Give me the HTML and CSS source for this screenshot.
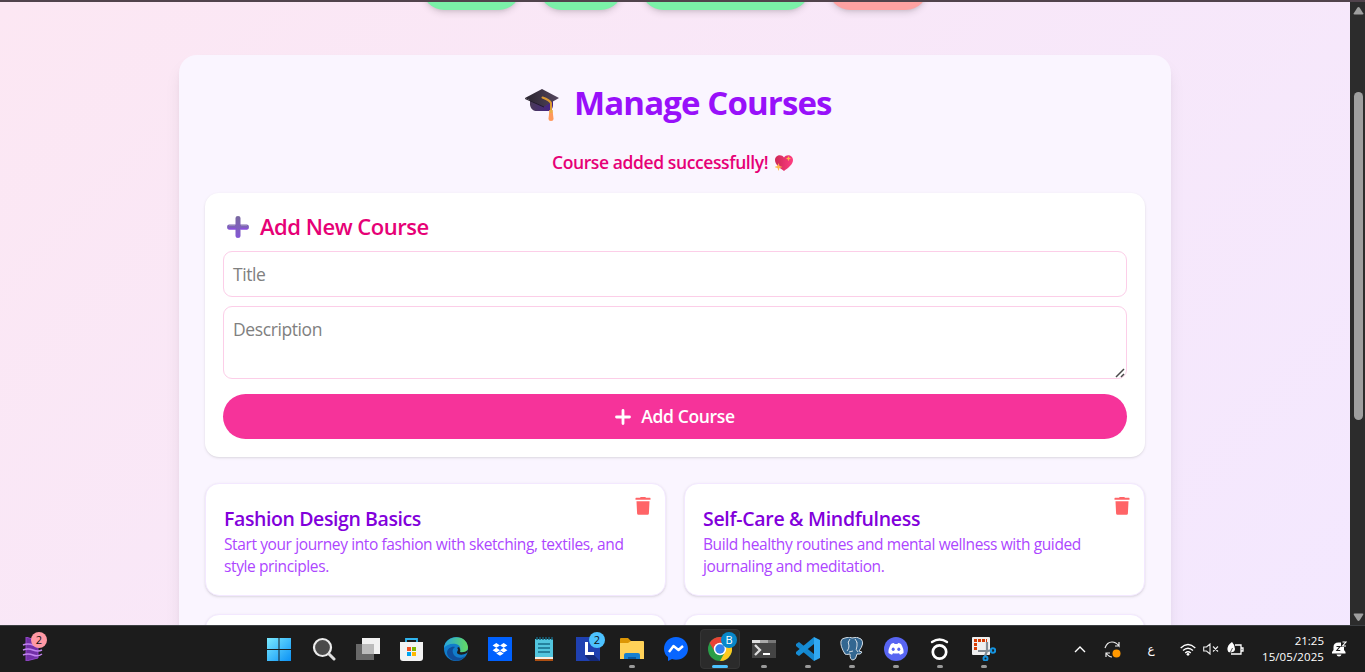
FILE: index.html
```html
<!DOCTYPE html>
<html lang="en">
<head>
<meta charset="utf-8">
<title>Manage Courses</title>
<link rel="stylesheet" href="styles.css">
</head>
<body>
<div class="screen">
  <div class="browser">
    <main class="page">
      <nav class="nav">
        <span class="pill pill-a"></span><span class="pill pill-b"></span><span class="pill pill-c"></span><span class="pill pill-red"></span>
      </nav>
      <section class="panel">
        <h1 class="heading">
          <svg class="cap" viewBox="0 0 36 36"><defs><linearGradient id="cg" x1="0" x2="1"><stop offset="0" stop-color="#29242e"/><stop offset="1" stop-color="#55465f"/></linearGradient><linearGradient id="cp" x1="0" x2="1"><stop offset="0" stop-color="#4a3b57"/><stop offset="1" stop-color="#45208b"/></linearGradient></defs><path d="M6 13v6c1 4 3 6 7 6h12c2 0 4-3 4-6v-6z" fill="url(#cp)"/><path d="M1 12 18 3 35 12 20 20.500z" fill="url(#cg)"/><path d="m1 12 19 8.500v1L1 13z" fill="#211c27"/><path d="M18.500 11.500q7 2.500 8.500 5.500v9" fill="none" stroke="#d99832" stroke-width="2" stroke-linecap="round"/><path d="M25.500 24h3l1 8.500q0 2.500-2.500 2.500t-2.500-2.500z" fill="#ff995b"/><path d="M25.500 24h3v3h-3z" fill="#e9ad45"/></svg>
          <span class="heading-text">Manage Courses</span>
        </h1>
        <p class="notice"><span class="notice-text">Course added successfully!</span>
          <svg class="heart" viewBox="0 0 18 18"><defs><linearGradient id="hg" x1="0" x2="1"><stop offset="0" stop-color="#ce2856"/><stop offset="1" stop-color="#ff3d82"/></linearGradient></defs><path d="M9 17C5 14 0 10.500 0 6c0-5 6.500-6.500 9-2.500C11.500-.5 18 1 18 6c0 4.500-5 8-9 11z" fill="url(#hg)"/><path d="m3.500 9 1 3 3 1-3 1-1 3-1-3-3-1 3-1zM13.500 2l.8 1.800 1.800.8-1.800.7-.8 1.900-.8-1.900-1.800-.7 1.800-.8z" fill="#fdb64e"/></svg>
        </p>
        <form class="form">
          <h2 class="form-title">
            <svg class="plus3d" viewBox="0 0 24 24"><defs><linearGradient id="pg" x1="0" y1="0" x2="0" y2="1"><stop offset="0" stop-color="#79699f"/><stop offset="1" stop-color="#8457d6"/></linearGradient></defs><path d="M9.500 3q0-2 2.500-2t2.500 2v6.500H21q2 0 2 2.500t-2 2.500h-6.500V21q0 2-2.500 2t-2.500-2v-6.500H3q-2 0-2-2.500t2-2.500h6.500z" fill="url(#pg)"/><path d="M2.500 13.800h7.500M14.500 13.800h7" stroke="#8d4be8" stroke-width="1.300"/><path d="M3 10.500h6M15 10.500h6" stroke="#9489b5"/></svg>
            <span class="form-title-text">Add New Course</span>
          </h2>
          <div class="field">Title</div>
          <div class="field area">Description
            <svg class="grip" viewBox="0 0 10 10"><path d="m1 9 8-8M6 9l3-3" stroke="#4a4a4a" stroke-width="1.500"/></svg>
          </div>
          <div class="submit"><svg class="plus" viewBox="0 0 16 16"><path d="M8 1.500v13M1.500 8h13" stroke="#fff" stroke-width="2.800" stroke-linecap="round"/></svg><span class="submit-text">Add Course</span></div>
        </form>
        <div class="grid">
          <article class="card">
            <svg class="trash" viewBox="0 0 16 18"><path d="M5 .8 5.700 0h4.600l.7.800h4q.5 0 .5.500v1.500H.5V1.300q0-.5.500-.5zM1.500 4.200h13l-.6 12.300q-.1 1.300-1.300 1.300H3.400q-1.200 0-1.300-1.300z" fill="#ff6467"/></svg>
            <h3 class="card-title">Fashion Design Basics</h3>
            <p class="card-text">Start your journey into fashion with sketching, textiles, and<br>style principles.</p>
          </article>
          <article class="card">
            <svg class="trash" viewBox="0 0 16 18"><path d="M5 .8 5.700 0h4.600l.7.800h4q.5 0 .5.500v1.500H.5V1.300q0-.5.500-.5zM1.500 4.200h13l-.6 12.300q-.1 1.300-1.300 1.300H3.400q-1.200 0-1.300-1.300z" fill="#ff6467"/></svg>
            <h3 class="card-title wide">Self-Care &amp; Mindfulness</h3>
            <p class="card-text">Build healthy routines and mental wellness with guided<br>journaling and meditation.</p>
          </article>
          <article class="card"></article>
          <article class="card"></article>
        </div>
      </section>
    </main>
    <aside class="scrollbar">
      <svg class="arrow" viewBox="0 0 15 20"><path d="M8.500 5q.7 0 1.200.7l3.500 5.500q.6 1.300-.8 1.300H4.600q-1.400 0-.8-1.300l3.500-5.500Q7.800 5 8.500 5z" fill="#9f9f9f"/></svg>
      <span class="thumb"></span>
      <svg class="arrow" viewBox="0 0 15 20"><path d="M8.500 16q.7 0 1.200-.7l3.500-5.500q.6-1.300-.8-1.300H4.600q-1.400 0-.8 1.300l3.500 5.500q.5.700 1.200.7z" fill="#9f9f9f"/></svg>
    </aside>
  </div>
  <footer class="taskbar">
    <div class="widget">
      <svg viewBox="0 0 24 24"><path d="M4 0 16 4v17L4 24z" fill="#7330a8"/><path d="M4 0 16 4v17L4 24z" fill="none" stroke="#9247c8"/><path d="M1 8q5-2 10 0t9-1M1 13q5-2 10 0t9 0M1 18q5-2 10 0t9-1" fill="none" stroke="#c184ef" stroke-width="1.500"/></svg>
      <span class="badge pink">2</span>
    </div>
    <div class="apps">
      <div class="app start"><svg viewBox="0 0 24 24"><defs><linearGradient id="wg" x1="0" y1="0" x2="1" y2="1"><stop offset="0" stop-color="#7aeaff"/><stop offset="1" stop-color="#0b91f5"/></linearGradient></defs><path d="M0 1h11.500v11H0zm12.500 0H24v11H12.500zM0 13h11.500v11H0zm12.500 0H24v11H12.500z" fill="url(#wg)"/></svg></div>
      <div class="app"><svg viewBox="0 0 24 24"><circle cx="10.500" cy="10.500" r="8.500" fill="#4b4b4b" stroke="#ececec" stroke-width="2.200"/><path d="m17 17 5 5" stroke="#ddd" stroke-width="3" stroke-linecap="round"/></svg></div>
      <div class="app"><svg viewBox="0 0 24 24"><path d="M6 1h18v16H6z" fill="#f1f1f1"/><path d="M0 7h18v16H0z" fill="#686868"/><path d="M6 7h12v10H6z" fill="#bbb"/></svg></div>
      <div class="app"><svg viewBox="0 0 24 24"><path d="M6 6V2h11v4" fill="none" stroke="#30b5ef" stroke-width="1.800"/><path d="M0 5h23v16q0 3-3 3H3q-3 0-3-3z" fill="#f3f3f3"/><path d="M7 10h4v4H7z" fill="#f25022"/><path d="M12 10h4v4h-4z" fill="#7fba00"/><path d="M7 15h4v4H7z" fill="#00a4ef"/><path d="M12 15h4v4h-4z" fill="#ffb900"/></svg></div>
      <div class="app"><svg viewBox="0 0 24 24"><defs><linearGradient id="eg"><stop offset="0" stop-color="#26a5e0"/><stop offset="1" stop-color="#65db60"/></linearGradient></defs><circle cx="12" cy="12" r="12" fill="#117dcb"/><path d="M0 11C1-2 22-4 24 10c0 5-5 7-9 5 2-2 2-7-3-8C7 6 2 8 0 11z" fill="url(#eg)"/><path d="M9 12c-2 6 5 12 12 7-5 8-17 5-18-3 0-5 5-7 8-6z" fill="#104e9b"/><path d="M13 11c3 2-2 4 1 6q4 2 9-1l2-4q-4 4-9 3 1-2-1-5z" fill="#1e1e1e"/></svg></div>
      <div class="app"><svg viewBox="0 0 24 24"><path d="M0 0h24v24H0z" fill="#0061fe"/><path d="m8.300 6 3.700 2.400-3.700 2.400-3.700-2.400zm7.400 0 3.700 2.400-3.700 2.400L12 8.400zm-7.400 4.800 3.700 2.400-3.700 2.400-3.700-2.400zm7.400 0 3.700 2.400-3.700 2.400-3.700-2.400zM12 14.200l3.700 2.400-3.700 2.200-3.700-2.200z" fill="#fff"/></svg></div>
      <div class="app"><svg viewBox="0 0 24 24"><path d="M3 2h18v20H3z" fill="#52c5de"/><path d="M3 20h18v2H3z" fill="#f5eee4"/><path d="M3 22h18v2H3z" fill="#ae4f12"/><path d="M5 0v3m3-3v3m3-3v3m3-3v3m3-3v3m3-3v3" stroke="#176279" stroke-width="1.500"/><path d="M6 7h12M6 11h12M6 15h12" stroke="#176c89" stroke-width="1.700"/></svg></div>
      <div class="app"><svg viewBox="0 0 24 24"><path d="M0 0h24v24H0z" fill="#1f40b0"/><path d="m12 16 6 2 6 6H14l-5-5z" fill="#142a7c"/><path d="M9 5h3v10h6v3H9z" fill="#fff"/></svg><span class="badge blue">2</span></div>
      <div class="app open"><svg viewBox="0 0 24 24"><path d="M0 2q0-1 1-1h7l3 3h12v7H0z" fill="#dc9605"/><path d="M0 6h8l3-2h12q1 0 1 1v17H0z" fill="#ffd258"/><path d="M4 22v-4q0-2 2-2h12q2 0 2 2v4z" fill="#1680d1"/><path d="M8 22v-2h8v2z" fill="#075ba6"/></svg></div>
      <div class="app"><svg viewBox="0 0 24 24"><path d="M12 0C5 0 0 5 0 12q0 5 4 8v4l4-2q2 .7 4 .7c7 0 12-4.700 12-11S19 0 12 0z" fill="#0866ff"/><path d="m5 15 4.500-6 5 4L19 9" fill="none" stroke="#fff" stroke-width="2.400" stroke-linejoin="round"/></svg></div>
      <div class="app active"><svg viewBox="0 0 24 24"><circle cx="12" cy="12" r="12" fill="#299e48"/><path d="M1.600 6A12 12 0 0 1 22.400 6H12L7 15z" fill="#e94235"/><path d="M22.400 6A12 12 0 0 1 12 24l5-9-5-9z" fill="#fcc91f"/><circle cx="12" cy="12" r="6.200" fill="#fff"/><circle cx="12" cy="12" r="4.700" fill="#3380ed"/></svg><span class="badge profile">B</span></div>
      <div class="app open"><svg viewBox="0 0 24 24"><path d="M0 3h24v18H0z" fill="#444"/><path d="M0 3h8v3H0z" fill="#ddd"/><path d="M8 3h8v3H8z" fill="#aaa"/><path d="M16 3h8v3h-8z" fill="#777"/><path d="m3 8 5 5-5 5" fill="none" stroke="#ddd" stroke-width="2.300"/><path d="M11 17h7" stroke="#fff" stroke-width="2"/></svg></div>
      <div class="app open"><svg viewBox="0 0 24 24"><path d="m0 7 3-2 15 12v7L0 9z" fill="#1486cd"/><path d="M18 0v7L3 19l-3-2v-2z" fill="#168dd5"/><path d="m18 0 6 3v18l-6 3z" fill="#31a9f2"/></svg></div>
      <div class="app open"><svg viewBox="0 0 24 24"><path d="M5 1q5-2 7 0 5-2 9 1 4 4-2 12l3 1q-1 3-5 2-1 6-4 6t-3-6q-4 1-5 0Q0 9 1 4q1-3 4-3z" fill="#336791" stroke="#d4dce3" stroke-width="1"/><path d="M10 2q-3 3-1 7 0 3-2 5M15 2q3 3 2 7-2 4 1 6M9 15l4-1M16 5h1M8 5h1" fill="none" stroke="#d4dce3" stroke-width="1"/></svg></div>
      <div class="app open"><svg viewBox="0 0 24 24"><circle cx="12" cy="12" r="12" fill="#5865f2"/><path d="M7 7q1.500-.8 3-1l.5 1h3l.5-1q1.500.2 3 1 3 5 2.500 9-1.500 1.300-3.500 1.700l-1-1.500q-3 .8-6 0l-1 1.500Q6 17.300 4.500 16 4 12 7 7z" fill="#fff"/><ellipse cx="9.200" cy="12.300" rx="1.500" ry="1.700" fill="#5865f2"/><ellipse cx="14.800" cy="12.300" rx="1.500" ry="1.700" fill="#5865f2"/></svg></div>
      <div class="app open"><svg viewBox="0 0 24 24"><circle cx="11.500" cy="15" r="6.700" fill="none" stroke="#fff" stroke-width="2.700"/><path d="M4 5q7.500-5 15 0" fill="none" stroke="#fff" stroke-width="2.300" stroke-linecap="round"/></svg></div>
      <div class="app open"><svg viewBox="0 0 24 24"><rect width="18" height="18" rx="1" fill="#efefef"/><path d="M3.500 13V3.500H15" fill="none" stroke="#d83b01" stroke-width="3" stroke-dasharray="3 1"/><path d="M15 5v9l-2 5M6 14h10l4-1" fill="none" stroke="#848c94" stroke-width="2.200"/><circle cx="21" cy="13.500" r="2.200" fill="none" stroke="#1593df" stroke-width="2"/><circle cx="13.500" cy="21.500" r="2" fill="none" stroke="#1593df" stroke-width="2"/></svg></div>
    </div>
    <div class="tray">
      <svg class="chev" viewBox="0 0 12 12"><path d="m1 9 5-5 5 5" fill="none" stroke="#fff" stroke-width="1.400"/></svg>
      <svg class="sync" viewBox="0 0 17 17"><path d="M1 7q2-6 7-6 4 0 7 4V1m0 4h-4M2 16v-4h4m-4 0q3 4 6 4" fill="none" stroke="#eee" stroke-width="1.200"/><circle cx="12.500" cy="12.500" r="4" fill="#ff9800"/></svg>
      <span class="lang">ع</span>
      <svg class="wifi" viewBox="0 0 16 13"><path d="M.7 5q7.300-7 14.600 0M3 7.500q5-4.600 10 0M5.200 10q2.800-2.500 5.600 0" fill="none" stroke="#fff" stroke-width="1.300"/><circle cx="8" cy="11.300" r="1.400" fill="#fff"/></svg>
      <svg class="sound" viewBox="0 0 16 12"><path d="M.7 4h2.800L7 1v10L3.500 8H.7zM10 3.500l5 5m0-5-5 5" fill="none" stroke="#eee" stroke-width="1.100"/></svg>
      <svg class="battery" viewBox="0 0 17 14"><path d="M8 3h6v9H4M14 6h2v3h-2" fill="none" stroke="#fff" stroke-width="1.300"/><path d="M5 0Q0 3 .5 8 1 11 4 10.500 8 10 8 7 8 3 5 0z" fill="#fff"/><path d="m2.500 12 3-6" stroke="#222" stroke-width=".8" fill="none"/></svg>
      <div class="clock"><span class="time">21:25</span><span class="date">15/05/2025</span></div>
      <svg class="bell" viewBox="0 0 15 16"><path d="M0 12.500V11l1.500-2V6q0-4.500 5-4.500H9V6h3v3l1.500 2v1.500zM4.500 13.500h5q-.5 2-2.500 2t-2.500-2z" fill="#fff"/><path d="M4.500 5.500h3.500L4.800 9.500h3.500" fill="none" stroke="#1e1e1e" stroke-width="1.100"/><path d="M10.500 1H14l-3.500 4H14" fill="none" stroke="#fff" stroke-width="1.100"/></svg>
    </div>
  </footer>
</div>
</body>
</html>
```
FILE: styles.css
```css
* { box-sizing: border-box; }
body { margin: 0; font-family: "Open Sans", "Noto Sans", sans-serif; }
h1, h2, h3, p { margin: 0; }
svg { display: block; flex: none; }
.screen { width: 1365px; height: 672px; display: flex; flex-direction: column; overflow: hidden; }
.browser { height: 625px; border-top: 2px solid #51434c; display: flex; overflow: hidden; }
.page { width: 1350px; height: 623px; overflow: hidden; background: linear-gradient(135deg, #fce7f3, #f3e8ff 105%); display: flex; flex-direction: column; align-items: center; }
.nav { height: 8px; flex: none; display: flex; gap: 18px; align-items: flex-end; }
.pill { height: 45px; border-radius: 23px; background: #7bf1a8; box-shadow: 0 4px 7px -1px #0000001f, 0 2px 4px -2px #0000001f; }
.pill-a { width: 99px; }
.pill-b { width: 84px; }
.pill-c { width: 169px; }
.pill-red { width: 100px; background: #ffa2a2; }
.panel { width: 992px; flex: none; margin-top: 45px; padding: 25px 26px 27px; border-radius: 18px; background: #faf5ff; box-shadow: 0 11px 17px -3px #0000001a, 0 4px 7px -4px #0000001a; }
.heading { height: 45px; display: flex; align-items: center; padding-left: 320px; gap: 14px; font-size: 33px; line-height: 45px; font-weight: 700; color: #9810fa; white-space: nowrap; }
.cap { width: 36px; height: 36px; margin: 2px 0 0 -1px; }
.heading-text { letter-spacing: -.87px; }
.notice { margin-top: 23px; height: 27px; display: flex; align-items: center; padding-left: 347px; gap: 7px; font-size: 17.500px; font-weight: 600; color: #e60076; white-space: nowrap; }
.notice-text { letter-spacing: -.4px; }
.heart { width: 18px; height: 18px; margin-top: 2px; }
.form { margin-top: 18px; height: 264px; padding: 18px; border-radius: 14px; background: #fff; box-shadow: 0 1px 3px #0000001a, 0 1px 2px -1px #0000001a; }
.form-title { height: 31px; display: flex; align-items: center; gap: 10px; padding-left: 3px; font-size: 22px; font-weight: 600; color: #e60076; white-space: nowrap; }
.form-title-text { letter-spacing: -.48px; padding-bottom: 2px; }
.plus3d { width: 24px; height: 24px; }
.field { margin-top: 9px; height: 46px; padding: 0 9px; border: 1px solid #fccee8; border-radius: 9px; font-size: 17.500px; line-height: 45px; color: #808080; letter-spacing: -.4px; }
.area { height: 73px; position: relative; }
.grip { position: absolute; right: 1px; bottom: 0; width: 10px; height: 10px; }
.submit { margin-top: 15px; height: 45px; border-radius: 23px; background: #f6339a; color: #fff; display: flex; align-items: center; justify-content: center; gap: 10px; font-size: 17.500px; font-weight: 600; letter-spacing: -.35px; }
.submit-text { padding-bottom: 2px; }
.plus { width: 16px; height: 16px; }
.grid { margin-top: 26px; display: grid; grid-template-columns: 461px 461px; gap: 18px; }
.card { position: relative; height: 113px; padding: 21px 17px 22px 18px; border: 1px solid #f3e8ff; border-radius: 14px; background: #fff; box-shadow: 0 1px 3px #0000001a, 0 1px 2px -1px #0000001a; white-space: nowrap; }
.trash { position: absolute; top: 13px; right: 14px; width: 16px; height: 18px; }
.card-title { font-size: 19.500px; line-height: 27px; font-weight: 600; color: #8200db; letter-spacing: -.4px; }
.wide { letter-spacing: -.3px; }
.card-text { padding-top: 1px; font-size: 15.500px; line-height: 22px; color: #ad46ff; letter-spacing: -.39px; }
.scrollbar { width: 15px; background: #2c2c2c; display: flex; flex-direction: column; align-items: center; }
.arrow { width: 15px; height: 20px; }
.thumb { width: 9px; height: 328px; margin: 70px 0 185px 1px; border-radius: 5px; background: #9f9f9f; }
.taskbar { height: 47px; background: #1c1c1c; border-top: 1px solid #3c3f42; display: flex; color: #fff; }
.widget { width: 258px; padding: 11px 0 0 22px; position: relative; }
.widget svg { width: 24px; height: 24px; }
.badge { position: absolute; width: 16px; height: 16px; border-radius: 50%; font-size: 11px; line-height: 16px; text-align: center; color: #111; }
.pink { left: 31px; top: 6px; background: #ff99a4; }
.apps { width: 748px; display: flex; }
.app { position: relative; width: 44px; height: 46px; padding: 11px 10px; }
.app svg { width: 24px; height: 24px; }
.start { padding-left: 9px; }
.blue { right: 5px; top: 6px; background: #4cc2ff; }
.profile { right: 5px; top: 6px; background: #0787ca; color: #fff; }
.active { width: 40px; height: 40px; margin: 3px 2px 0; padding: 8px; border: 1px solid #353535; border-radius: 4px; background: #2b2b2b; }
.active .profile { right: 2px; top: 2px; }
.active svg { margin: -1px; }
.open::after { content: ""; position: absolute; left: 19px; bottom: 4px; width: 6px; height: 3px; border-radius: 2px; background: #999; }
.active::after { content: ""; position: absolute; left: 11px; bottom: 0; width: 16px; height: 3px; border-radius: 2px; background: #4cc2ff; }
.tray { flex: 1; display: flex; align-items: center; padding-left: 68px; }
.chev { width: 12px; height: 12px; }
.sync { width: 17px; height: 17px; margin-left: 18px; }
.lang { width: 10px; margin-left: 25px; font: 12px "DejaVu Sans", sans-serif; text-align: center; }
.wifi { width: 16px; height: 13px; margin-left: 24px; }
.sound { width: 16px; height: 12px; margin-left: 7px; }
.battery { width: 17px; height: 14px; margin-left: 8px; }
.clock { width: 80px; display: flex; flex-direction: column; align-items: flex-end; font-size: 11.500px; line-height: 16px; }
.date { letter-spacing: .1px; }
.bell { width: 15px; height: 16px; margin-left: 8px; }
```
